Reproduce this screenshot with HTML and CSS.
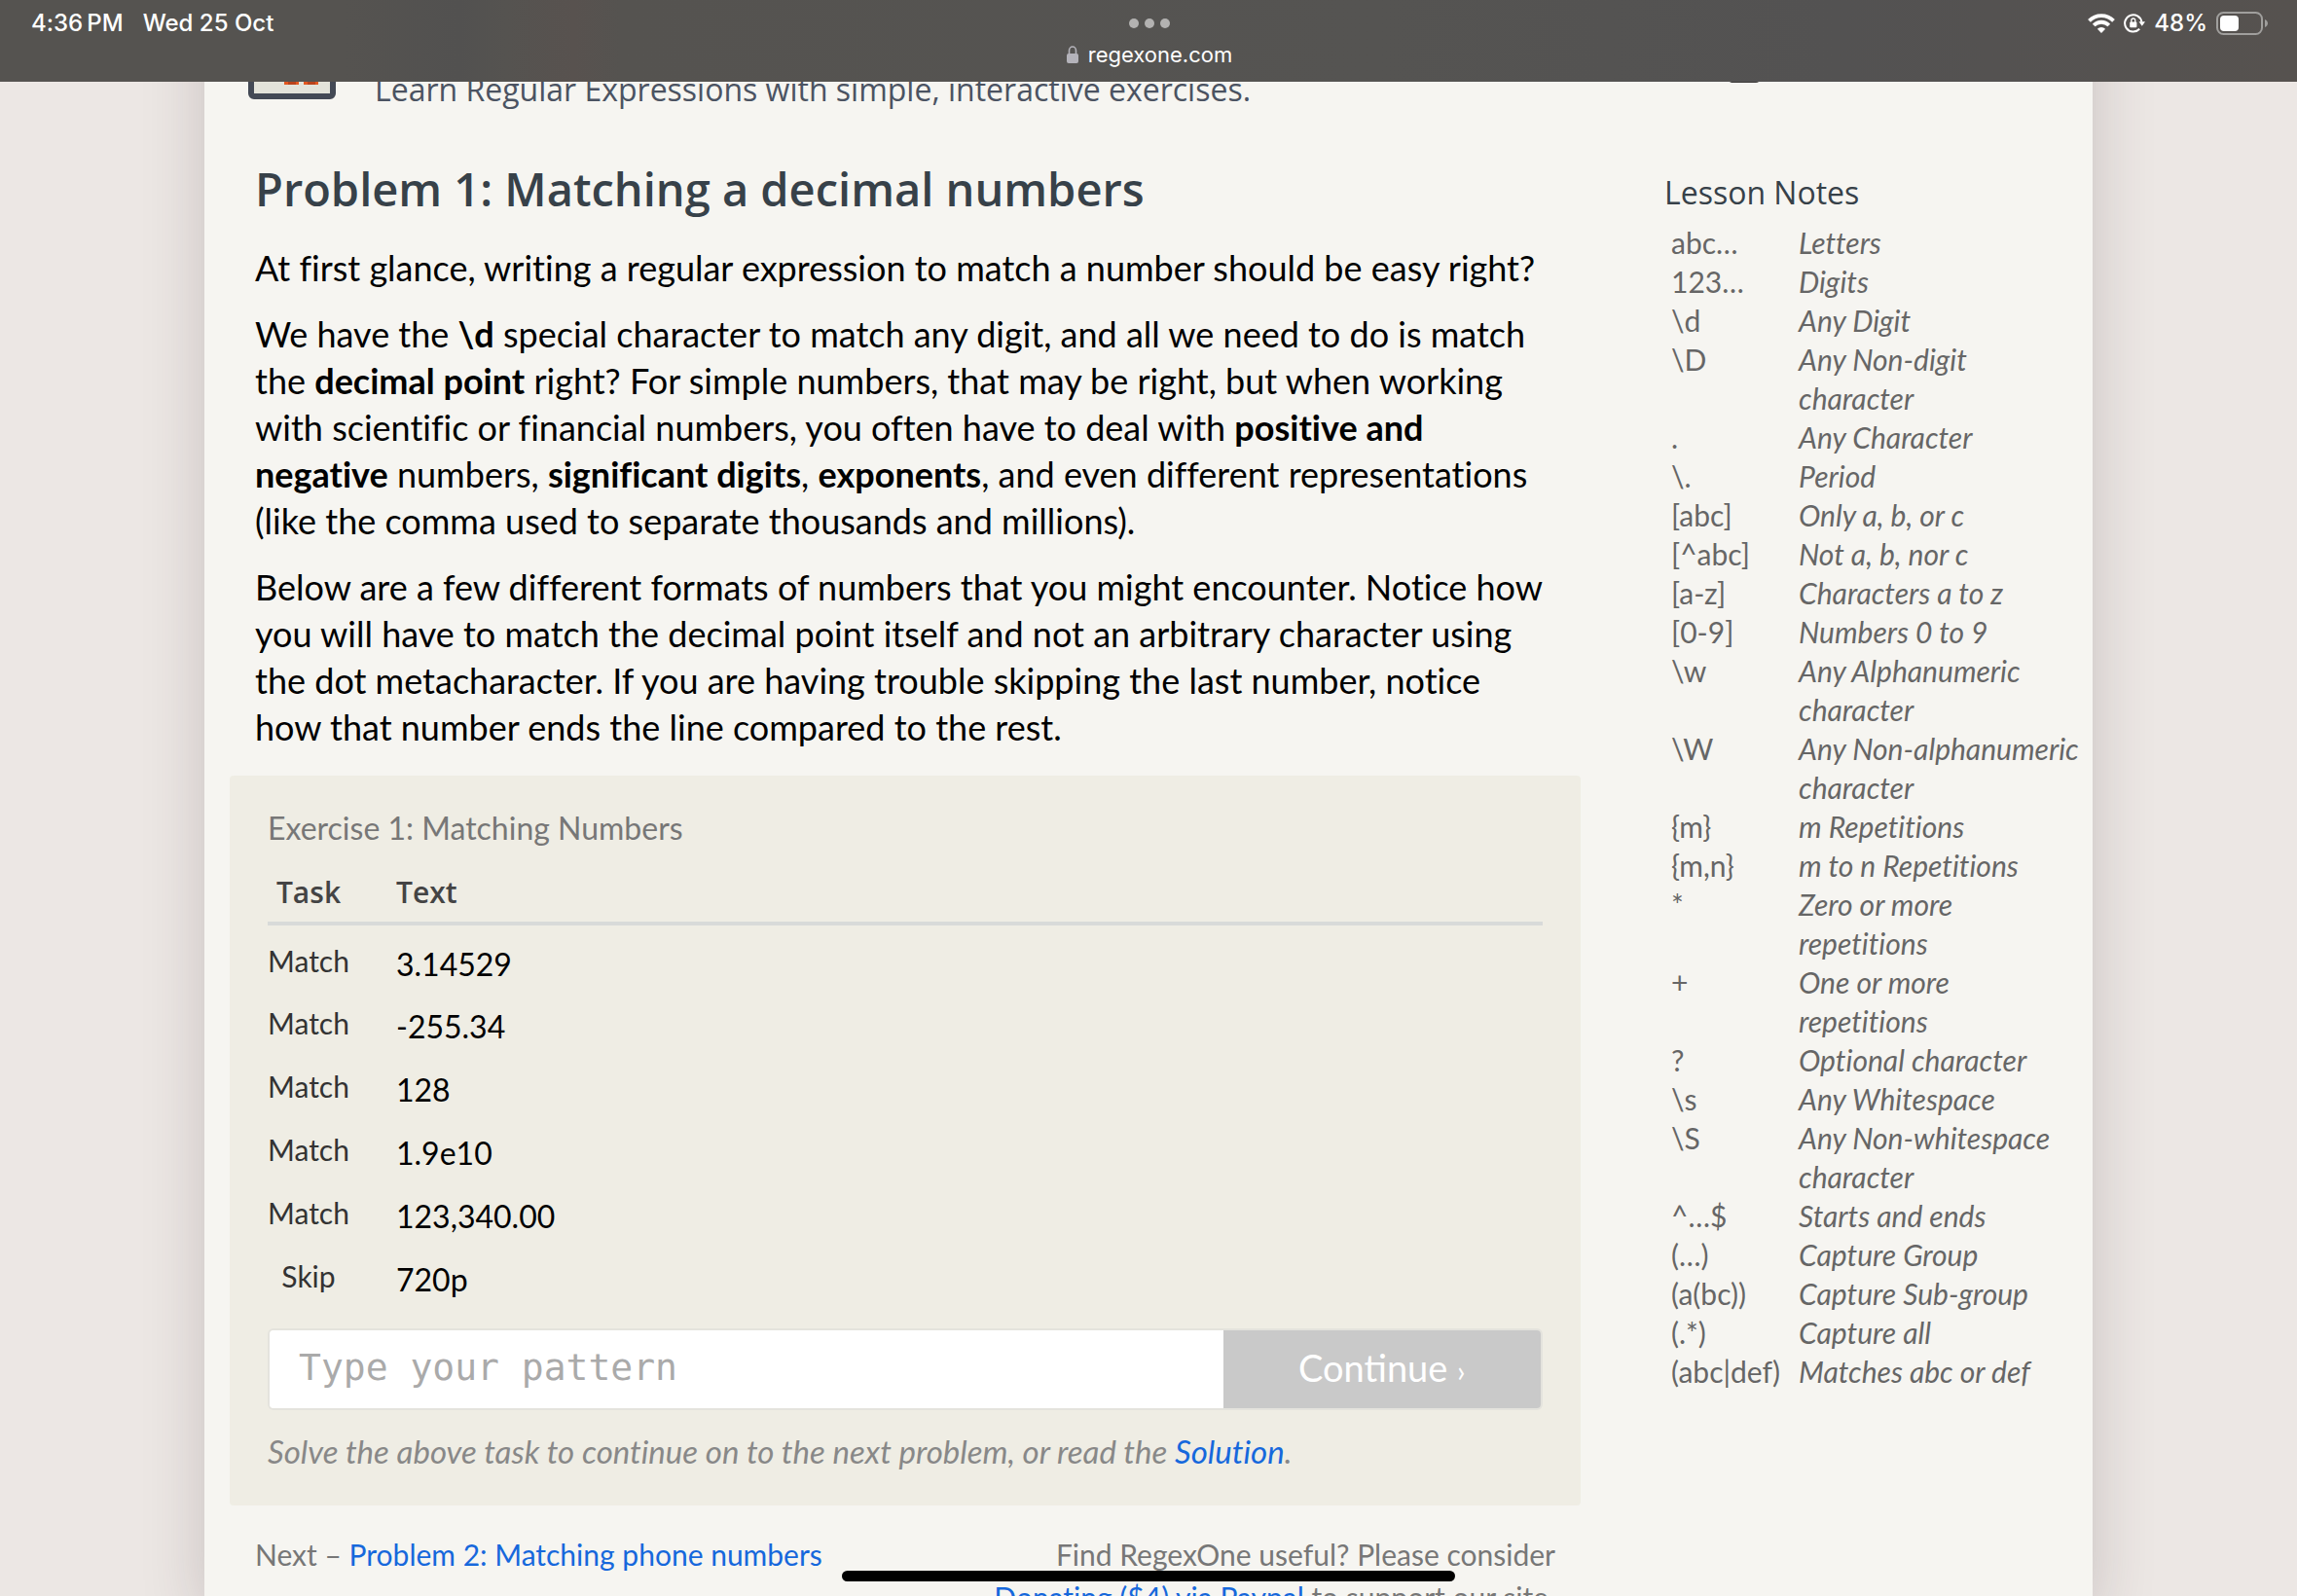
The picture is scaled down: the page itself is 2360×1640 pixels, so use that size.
FILE: index.html
```html
<!DOCTYPE html>
<html lang="en">
<head>
<meta charset="utf-8">
<meta name="viewport" content="width=device-width, initial-scale=1">
<title>RegexOne - Problem 1: Matching a decimal numbers</title>
<link rel="stylesheet" href="styles.css">
</head>
<body>
<div class="browser-bar">
  <div class="status-left"><span>4:36&thinsp;PM</span><span>Wed 25 Oct</span></div>
  <div class="address">
    <svg class="dots" viewBox="0 0 42 10" aria-hidden="true"><circle cx="5" cy="5" r="5"/><circle cx="21" cy="5" r="5"/><circle cx="37" cy="5" r="5"/></svg>
    <div class="host">
      <svg class="lock" viewBox="0 0 12 18" aria-hidden="true"><path d="M2.5 9V5a3.5 4 0 0 1 7 0v4" fill="none" stroke="#b4b3ba" stroke-width="1.6"/><rect y="8" width="12" height="10" rx="2" fill="#b4b3ba"/></svg>
      <span>regexone.com</span>
    </div>
  </div>
  <div class="status-right">
    <svg class="wifi" viewBox="0 0 28 20" aria-hidden="true"><g fill="none" stroke="#fff" stroke-width="3.8"><path d="M1.5 7.3a17.5 17.5 0 0 1 25 0"/><path d="M6.2 12a11 11 0 0 1 15.6 0"/></g><path d="M14 20l-4.1-4.3a5.8 5.8 0 0 1 8.2 0z" fill="#fff"/></svg>
    <svg class="rotation" viewBox="0 0 22 20" aria-hidden="true"><path d="M16.2 15.800a8.700 8.700 0 1 1 2.200-7.300" fill="none" stroke="#fff" stroke-width="2"/><path d="M15.500 8.200h6.500l-3.200 4.600z" fill="#fff"/><rect x="6.200" y="8.500" width="7.200" height="5.800" rx="1" fill="#fff"/><path d="M7.800 9V7a2 2 0 0 1 4 0V9" fill="none" stroke="#fff" stroke-width="1.3"/></svg>
    <span>48%</span>
    <svg class="battery" viewBox="0 0 53 24" aria-hidden="true"><rect x="1" y="1" width="46" height="22" rx="6.500" fill="none" stroke="#a09f9d" stroke-width="2"/><rect x="4" y="4" width="19" height="16" rx="4" fill="#fff"/><path d="M50 8c4 2 4 6 0 8z" fill="#a09f9d"/></svg>
  </div>
</div>

<div class="sheet">
  <header class="site-header">
    <svg class="logo" viewBox="0 0 90 90" aria-hidden="true"><rect x="3" y="3" width="84" height="84" rx="3" fill="#e3e3da" stroke="#434955" stroke-width="6"/><path d="M37 60h15v15H37zM57 60h15v15H57z" fill="#e2571f"/><path d="M41 70h8v5h-8zM61 70h8v5h-8z" fill="#b8431c"/></svg>
    <p class="tagline">Learn Regular Expressions with simple, interactive exercises.</p>
    <span class="nav-mark"></span>
  </header>

  <div class="columns">
    <main class="lesson">
      <h1>Problem 1: Matching a decimal numbers</h1>
      <div class="prose">
        <p>At first glance, writing a regular expression to match a number should be easy right?</p>
        <p>We have the <b>\d</b> special character to match any digit, and all we need to do is match the <b>decimal point</b> right? For simple numbers, that may be right, but when working with scientific or financial numbers, you often have to deal with <b>positive and negative</b> numbers, <b>significant digits</b>, <b>exponents</b>, and even different representations (like the comma used to separate thousands and millions).</p>
        <p>Below are a few different formats of numbers that you might encounter. Notice how you will have to match the decimal point itself and not an arbitrary character using the dot metacharacter. If you are having trouble skipping the last number, notice how that number ends the line compared to the rest.</p>
      </div>

      <section class="exercise">
        <h2>Exercise 1: Matching Numbers</h2>
        <table class="tasks">
          <thead><tr><th>Task</th><th>Text</th></tr></thead>
          <tbody>
            <tr><td>Match</td><td>3.14529</td></tr>
            <tr><td>Match</td><td>-255.34</td></tr>
            <tr><td>Match</td><td>128</td></tr>
            <tr><td>Match</td><td>1.9e10</td></tr>
            <tr><td>Match</td><td>123,340.00</td></tr>
            <tr><td>Skip</td><td>720p</td></tr>
          </tbody>
        </table>
        <form class="answer">
          <input type="text" placeholder="Type your pattern" aria-label="Type your pattern">
          <button type="button">Continue <span class="chevron">›</span></button>
        </form>
        <p class="hint">Solve the above task to continue on to the next problem, or read the <a href="#solution">Solution</a>.</p>
      </section>

      <footer class="lesson-footer">
        <p>Next – <a href="#problem-2">Problem 2: Matching phone numbers</a></p>
        <p class="donate">Find RegexOne useful? Please consider <a href="#donate">Donating ($4) via Paypal</a> to support our site.</p>
      </footer>
    </main>

    <aside class="notes">
      <h2>Lesson Notes</h2>
      <table>
        <tr><td>abc…</td><td>Letters</td></tr>
        <tr><td>123…</td><td>Digits</td></tr>
        <tr><td>\d</td><td>Any Digit</td></tr>
        <tr><td>\D</td><td>Any Non-digit character</td></tr>
        <tr><td>.</td><td>Any Character</td></tr>
        <tr><td>\.</td><td>Period</td></tr>
        <tr><td>[abc]</td><td>Only a, b, or c</td></tr>
        <tr><td>[^abc]</td><td>Not a, b, nor c</td></tr>
        <tr><td>[a-z]</td><td>Characters a to z</td></tr>
        <tr><td>[0-9]</td><td>Numbers 0 to 9</td></tr>
        <tr><td>\w</td><td>Any Alphanumeric character</td></tr>
        <tr><td>\W</td><td>Any Non-alphanumeric character</td></tr>
        <tr><td>{m}</td><td>m Repetitions</td></tr>
        <tr><td>{m,n}</td><td>m to n Repetitions</td></tr>
        <tr><td>*</td><td>Zero or more repetitions</td></tr>
        <tr><td>+</td><td>One or more repetitions</td></tr>
        <tr><td>?</td><td>Optional character</td></tr>
        <tr><td>\s</td><td>Any Whitespace</td></tr>
        <tr><td>\S</td><td>Any Non-whitespace character</td></tr>
        <tr><td>^…$</td><td>Starts and ends</td></tr>
        <tr><td>(…)</td><td>Capture Group</td></tr>
        <tr><td>(a(bc))</td><td>Capture Sub-group</td></tr>
        <tr><td>(.*)</td><td>Capture all</td></tr>
        <tr><td>(abc|def)</td><td>Matches abc or def</td></tr>
      </table>
    </aside>
  </div>
</div>
<div class="home-indicator"></div>
</body>
</html>
```
FILE: styles.css
```css
* {
  box-sizing: border-box;
}

body {
  margin: 0;
  height: 100vh;
  overflow: hidden;
  background: #ece7e4;
  color: #000;
  font-family: "Trebuchet MS", Lato, sans-serif;
  font-size: 36px;
  font-variant-ligatures: none;
  line-height: 48px;
}

h1, h2, p {
  margin: 0;
}

a {
  color: #1668dc;
  text-decoration: none;
}

table {
  border-collapse: collapse;
}

td, th {
  padding: 0;
  text-align: left;
  vertical-align: top;
}

/* Browser chrome */
.browser-bar {
  position: fixed;
  inset: 0 0 auto;
  z-index: 2;
  display: grid;
  grid-template-columns: 1fr auto 1fr;
  height: 84px;
  padding: 0 30px 0 32px;
  background: linear-gradient(90deg, #555350 0%, #555350 15%, #525150 20%, #555350 22%, #58524f 25%, #555350 27%, #555452 60%, #535252 80%, #56524f 100%);
  color: #fff;
  font-family: Inter, sans-serif;
  font-size: 24px;
  font-weight: 500;
  line-height: 48px;
}

.status-left,
.status-right {
  display: flex;
  align-items: center;
  height: 48px;
  gap: 20px;
}

.status-right {
  justify-content: flex-end;
  gap: 9px;
}

.address {
  display: flex;
  flex-direction: column;
  align-items: center;
  gap: 12px;
  padding-top: 19px;
}

.dots {
  width: 42px;
  height: 10px;
  fill: #b3b2b1;
}

.host {
  display: flex;
  align-items: center;
  gap: 10px;
  font-size: 22px;
  font-weight: 400;
  line-height: 30px;
}

.lock {
  width: 12px;
  height: 18px;
}

.wifi {
  width: 28px;
  height: 20px;
}

.rotation {
  width: 22px;
  height: 20px;
}

.battery {
  width: 53px;
  height: 24px;
}

.home-indicator {
  position: fixed;
  bottom: 15px;
  left: 50%;
  width: 630px;
  height: 11px;
  margin-left: -315px;
  border-radius: 6px;
  background: #000;
}

/* Page */
.sheet {
  max-width: 1940px;
  min-height: 100vh;
  margin: 0 auto;
  background: #f6f5f1;
  box-shadow: 0 0 60px rgba(60, 40, 50, 0.2);
}

.site-header {
  display: flex;
  align-items: flex-end;
  gap: 40px;
  height: 112px;
  padding: 0 342px 0 45px;
}

.logo {
  width: 90px;
  height: 90px;
  margin-bottom: 10px;
}

.tagline {
  color: #4b5362;
  font-family: "Open Sans", sans-serif;
  font-size: 32px;
  line-height: 40px;
}

.nav-mark {
  width: 32px;
  height: 20px;
  margin: 0 0 27px auto;
  border-radius: 4px;
  background: #3d3b3a;
}

.columns {
  display: grid;
  grid-template-columns: 1fr 440px;
  gap: 86px;
  padding: 50px 0 0 26px;
}

.lesson h1 {
  padding-left: 26px;
  color: #374149;
  font-family: "Open Sans", sans-serif;
  font-size: 47px;
  font-weight: 600;
  line-height: 64px;
}

.prose {
  display: flex;
  flex-direction: column;
  gap: 20px;
  padding: 25px 32px 26px 26px;
}

.exercise {
  padding: 34px 39px 32px;
  border-radius: 4px;
  background: #efede4;
}

.exercise h2 {
  color: #777;
  font-size: 32px;
  font-weight: 400;
  line-height: 40px;
}

.tasks {
  width: 100%;
  margin-bottom: 25px;
}

.tasks th {
  height: 78px;
  padding-top: 26px;
  border-bottom: 4px solid #d8dad9;
  color: #444;
  font-family: "Open Sans", sans-serif;
  font-size: 30px;
  font-weight: 600;
  line-height: 40px;
}

.tasks th:first-child,
.tasks td:first-child {
  width: 84px;
  text-align: center;
}

.tasks th + th,
.tasks td + td {
  padding-left: 48px;
}

.tasks td {
  height: 65px;
  padding-top: 16px;
  font-size: 32px;
}

.tasks td:first-child {
  padding-top: 12px;
  color: #333;
  font-size: 30px;
}

.answer {
  display: flex;
  height: 84px;
  border: 2px solid #e4e3dd;
  border-radius: 6px;
  overflow: hidden;
}

.answer input {
  flex: 1;
  min-width: 0;
  padding: 0 30px 4px;
  border: 0;
  background: #fff;
  font-family: "DejaVu Sans Mono", monospace;
  font-size: 38px;
}

.answer input::placeholder {
  color: #aaa;
  opacity: 1;
}

.answer button {
  flex: 0 0 25%;
  padding: 0 0 4px;
  border: 0;
  background: #c9c9c9;
  color: #fff;
  font-family: inherit;
  font-size: 38px;
}

.chevron {
  font-size: 30px;
}

.hint {
  padding-top: 18px;
  color: #888;
  font-size: 33px;
  font-style: italic;
}

.lesson-footer {
  display: flex;
  justify-content: space-between;
  padding: 28px 26px 0;
  color: #777;
  font-size: 30px;
  line-height: 44px;
}

.donate {
  width: 620px;
  text-align: right;
}

/* Sidebar */
.notes {
  color: #666;
  font-size: 30px;
  line-height: 40px;
}

.notes h2 {
  padding: 16px 0 11px;
  color: #374149;
  font-family: "Open Sans", sans-serif;
  font-size: 32px;
  font-weight: 400;
  line-height: 40px;
}

.notes td {
  padding-left: 7px;
}

.notes td:first-child {
  width: 131px;
}

.notes td + td {
  padding: 0 10px 0 7px;
  font-style: italic;
}
```
